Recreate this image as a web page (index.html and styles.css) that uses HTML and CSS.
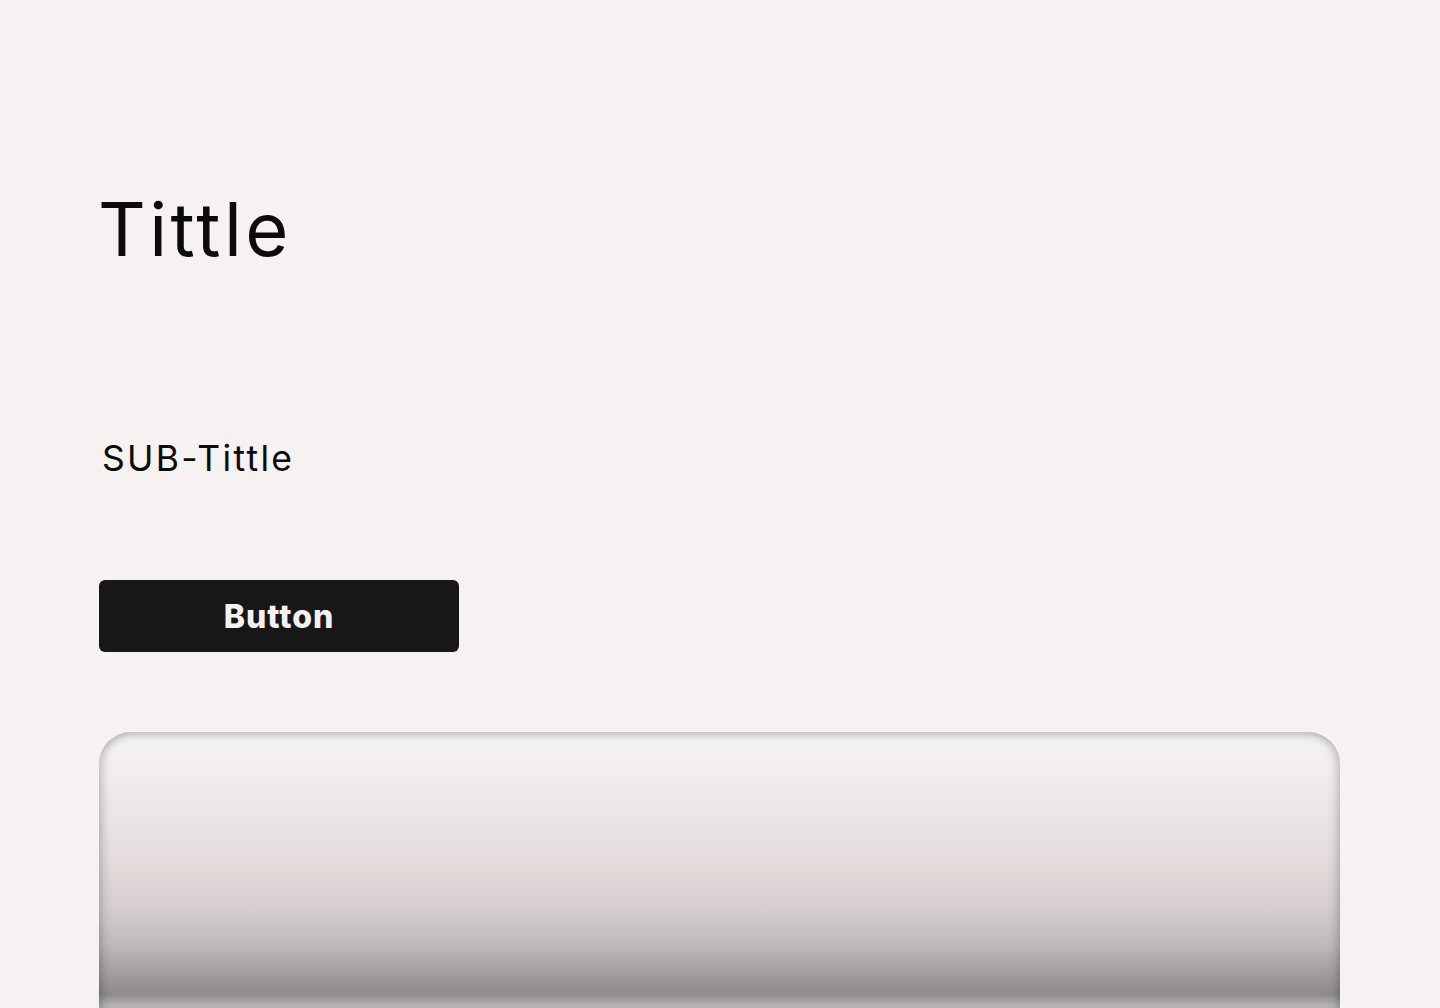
FILE: index.html
```html
<!DOCTYPE html>
<html>
<head>
<meta charset="utf-8">
<link rel="stylesheet" href="styles.css">
</head>
<body>
<main class="page">
  <h1 class="title">Tittle</h1>
  <p class="subtitle">SUB-Tittle</p>
  <button class="btn">Button</button>
  <div class="card"></div>
</main>
</body>
</html>
```
FILE: styles.css
```css
html, body {
  margin: 0;
  padding: 0;
  background: #f7f2f2;
  overflow: hidden;
  height: 1008px;
}
.page {
  display: flex;
  flex-direction: column;
  align-items: flex-start;
  padding: 180px 100px 0 99px;
  font-family: Inter, "Noto Sans", sans-serif;
}
.page > * {
  flex-shrink: 0;
}
.title {
  margin: 0 0 0 -1px;
  font-size: 74px;
  font-weight: 400;
  line-height: 98px;
  letter-spacing: 3.4px;
  color: #0b0b0b;
}
.subtitle {
  margin: 156px 0 0 3px;
  font-size: 35.5px;
  font-weight: 400;
  line-height: 50px;
  letter-spacing: 2.3px;
  color: #0b0b0b;
}
.btn {
  margin-top: 96px;
  width: 360px;
  height: 72px;
  border: 0;
  border-radius: 6px;
  background: #181717;
  color: #f5f1f1;
  font-family: Inter, "Noto Sans", sans-serif;
  font-size: 32px;
  font-weight: 800;
  letter-spacing: 1px;
  padding: 0;
  cursor: pointer;
}
.card {
  margin-top: 80px;
  align-self: stretch;
  height: 320px;
  border-radius: 32px 32px 0 0;
  background: linear-gradient(180deg,
    #f6f4f3 0px,
    #f3f0ef 30px,
    #ebe6e6 80px,
    #e4dbdb 130px,
    #d6cece 175px,
    #c3bcbc 210px,
    #a5a1a1 238px,
    #8f8b8b 262px,
    #b6b3b3 274px,
    #c0bdbd 320px);
  box-shadow: inset 0 3px 10px rgba(0,0,0,0.16), inset 5px 0 10px rgba(0,0,0,0.10), inset -5px 0 10px rgba(0,0,0,0.10);
}
```
